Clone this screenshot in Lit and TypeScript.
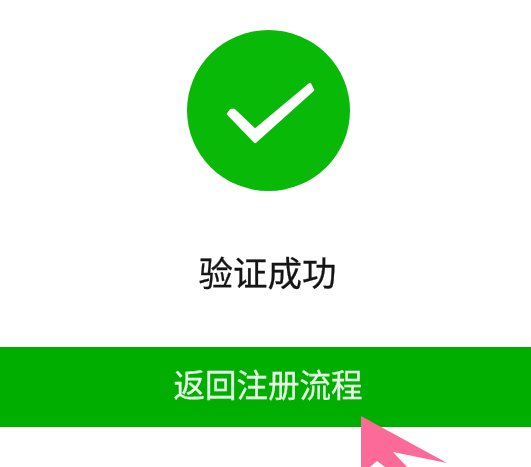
import { LitElement, html, css } from "lit";
import { customElement } from "lit/decorators.js";

@customElement("app-root")
export class AppRoot extends LitElement {
  static styles = css`
    :host {
      display: block;
      position: relative;
      width: 531px;
      height: 467px;
      overflow: hidden;
      background: #fff;
      font-family: "Noto Sans CJK SC", "Noto Sans", sans-serif;
    }
    .page {
      display: flex;
      flex-direction: column;
      align-items: center;
      padding-top: 30px;
    }
    .badge {
      display: block;
      width: 163px;
      height: 161px;
      margin-left: 6px;
      filter: blur(0.6px);
    }
    .title {
      margin-top: 61px;
      margin-left: 4px;
      height: 38px;
      font-size: 34.5px;
      line-height: 38px;
      color: #151515;
      -webkit-text-stroke: 0.3px #151515;
      filter: blur(0.6px);
    }
    .action {
      box-sizing: border-box;
      width: 100%;
      height: 80px;
      margin-top: 57px;
      padding: 0 0 9px 5px;
      border: 0;
      display: flex;
      align-items: center;
      justify-content: center;
      background: #00ae00;
      color: #e6f7e6;
      font: inherit;
      font-size: 31.5px;
      -webkit-text-stroke: 0.3px #e6f7e6;
      filter: blur(0.5px);
    }
    .pointer {
      position: absolute;
      left: 355px;
      top: 410px;
      width: 100px;
      height: 57px;
      filter: blur(0.4px);
    }
  `;

  render() {
    return html`
      <div class="page">
        <svg class="badge" viewBox="0 0 163 161" aria-hidden="true">
          <ellipse cx="81.5" cy="80.5" rx="81.5" ry="80.5" fill="#08b908"></ellipse>
          <path
            d="M44 80 L41 84 L68 112 L126 60 L123 54 L68 100 L47 80 Z"
            fill="#fff"
            stroke="#fff"
            stroke-width="2.5"
            stroke-linejoin="round"
          ></path>
        </svg>
        <div class="title">验证成功</div>
        <button class="action">返回注册流程</button>
      </div>
      <svg class="pointer" viewBox="0 0 100 57" aria-hidden="true">
        <path d="M6 6 L92 53 L38 42 L52 57 L6 57 Z" fill="#fb6a98"></path>
        <path d="M15 57 L22 51 L30 57 Z" fill="#fff"></path>
      </svg>
    `;
  }
}
